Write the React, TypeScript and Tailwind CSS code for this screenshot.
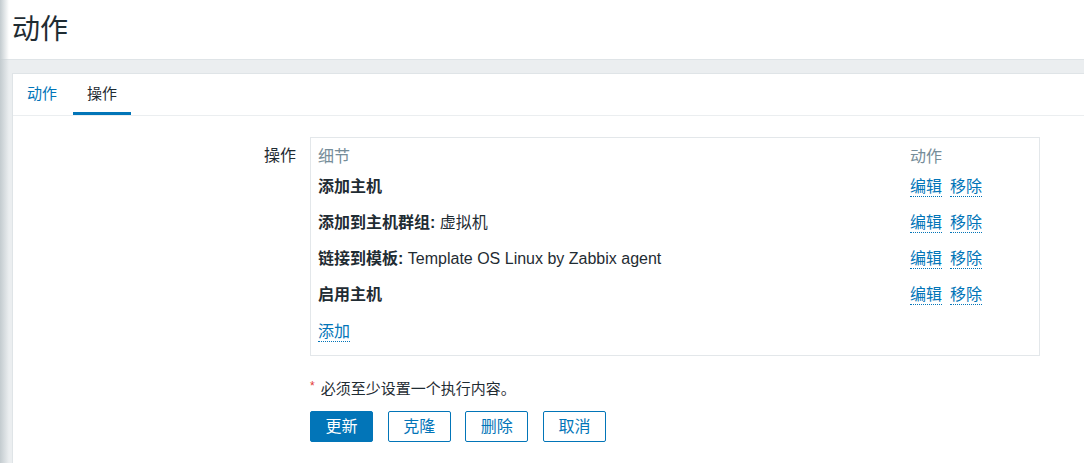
import { ReactNode } from 'react'

const rows: { label: string; value?: string }[] = [
  { label: '添加主机' },
  { label: '添加到主机群组', value: '虚拟机' },
  { label: '链接到模板', value: 'Template OS Linux by Zabbix agent' },
  { label: '启用主机' },
]

function Link({ children }: { children: ReactNode }) {
  return (
    <span className="inline-block border-b border-dotted border-[#0275b8] leading-[19px] text-[#0275b8] cursor-pointer">
      {children}
    </span>
  )
}

export default function App() {
  return (
    <div
      className="relative flex h-[463px] w-[1084px] flex-col overflow-hidden bg-[#ebeef0] text-[#1f2c33]"
      style={{ fontFamily: '"Liberation Sans", "Noto Sans CJK SC", sans-serif' }}
    >
      {/* sidebar shadow */}
      <div className="pointer-events-none absolute left-0 top-0 h-full w-[9px] bg-gradient-to-r from-[#c3cbcf] to-transparent" />

      {/* page header */}
      <div className="flex h-[60px] shrink-0 items-center border-b border-[#dfe4e7] bg-white px-[12px]">
        <h1 className="text-[28px] leading-none font-normal">动作</h1>
      </div>

      <div className="flex flex-1 flex-col pl-[12px] pt-[13px]">
        <div className="flex flex-1 flex-col border border-r-0 border-b-0 border-[#dfe4e7] bg-white">
          {/* tabs */}
          <div className="flex h-[42px] border-b border-[#ebeef0] text-[15px]">
            <div className="flex h-[41px] items-center pl-[14px] pr-[16px] text-[#0275b8]">动作</div>
            <div className="flex h-[41px] items-center border-b-[3px] border-[#0275b8] px-[14px] pt-[3px]">操作</div>
          </div>

          {/* form */}
          <div className="flex gap-[14px] pt-[21px] text-[16px]">
            <div className="w-[283px] pt-[7px] text-right leading-[24px]">操作</div>
            <div className="flex flex-col">
              <div className="w-[730px] border border-[#e3e7ea] pl-[7px] pr-[8px] pt-[7px] pb-[6px]">
                <div className="grid h-[24px] grid-cols-[592px_1fr] items-center text-[#768d99]">
                  <span>细节</span>
                  <span>动作</span>
                </div>
                {rows.map(r => (
                  <div key={r.label} className="grid h-[36px] grid-cols-[592px_1fr] items-center">
                    <span>
                      <b className="font-bold">{r.label}{r.value ? ':' : ''}</b>
                      {r.value && <span> {r.value}</span>}
                    </span>
                    <span className="flex gap-[8px]">
                      <Link>编辑</Link>
                      <Link>移除</Link>
                    </span>
                  </div>
                ))}
                <div className="flex h-[36px] items-center pt-[2px]">
                  <Link>添加</Link>
                </div>
              </div>

              <div className="mt-[23px] flex h-[20px] items-center text-[15px]">
                <span className="mr-[6px] -translate-y-[3px] text-[12px] text-[#e33734]">*</span>
                必须至少设置一个执行内容。
              </div>

              <div className="mt-[12px] flex gap-[14.67px] text-[16px]">
                <button className="h-[31px] w-[63px] rounded-[2px] border border-[#0275b8] bg-[#0275b8] text-white">更新</button>
                <button className="h-[31px] w-[63px] rounded-[2px] border border-[#0275b8] bg-white text-[#0275b8]">克隆</button>
                <button className="h-[31px] w-[63px] rounded-[2px] border border-[#0275b8] bg-white text-[#0275b8]">删除</button>
                <button className="h-[31px] w-[63px] rounded-[2px] border border-[#0275b8] bg-white text-[#0275b8]">取消</button>
              </div>
            </div>
          </div>
        </div>
      </div>
    </div>
  )
}
